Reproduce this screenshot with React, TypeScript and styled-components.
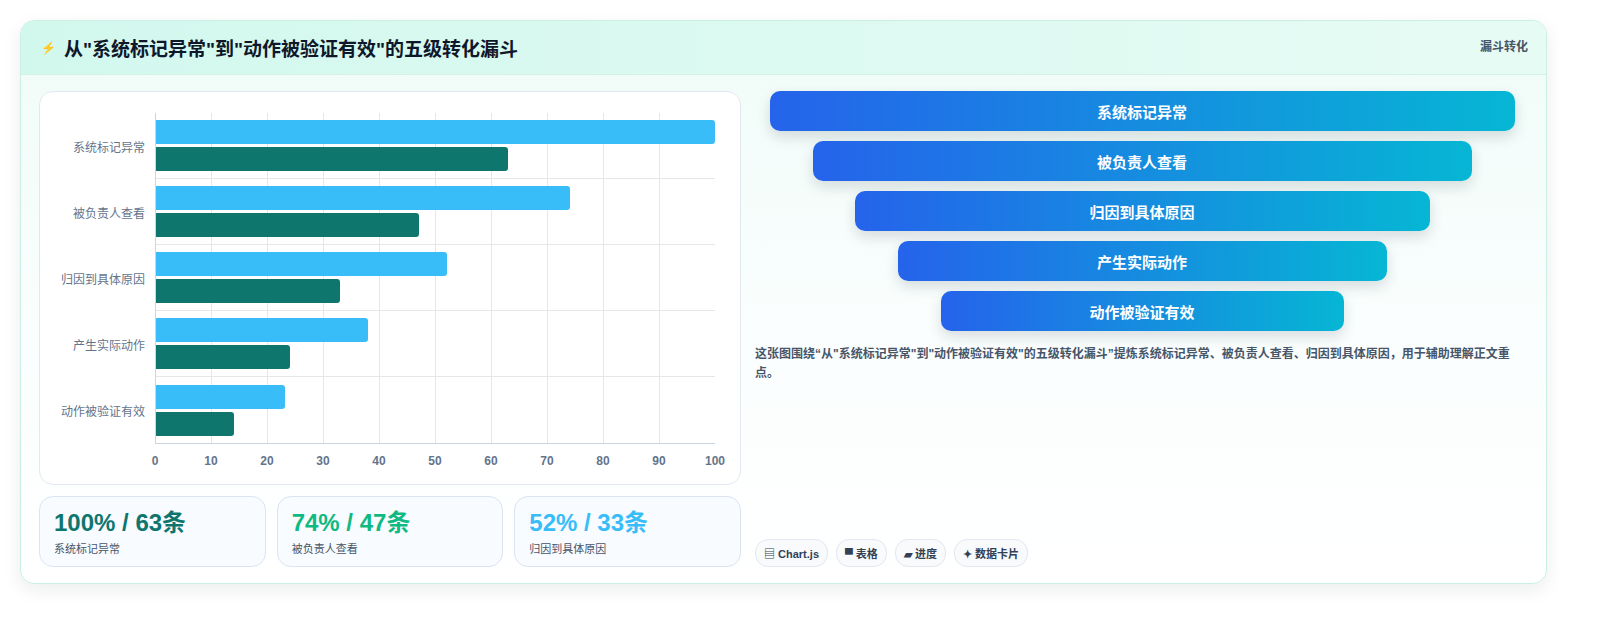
import styled, { createGlobalStyle } from "styled-components";

const GlobalStyle = createGlobalStyle`
  body {
    margin: 0;
    background: #ffffff;
    font-family: "Liberation Sans", "Noto Sans CJK SC", sans-serif;
  }
`;

const rows = [
  { name: "系统标记异常", a: 100, b: 63 },
  { name: "被负责人查看", a: 74, b: 47 },
  { name: "归因到具体原因", a: 52, b: 33 },
  { name: "产生实际动作", a: 38, b: 24 },
  { name: "动作被验证有效", a: 23, b: 14 },
];

const funnelWidths = [745, 659, 575, 489, 403];

const stats = [
  { value: "100% / 63条", label: "系统标记异常", color: "#0f766e" },
  { value: "74% / 47条", label: "被负责人查看", color: "#10b981" },
  { value: "52% / 33条", label: "归因到具体原因", color: "#38bdf8" },
];

const tags = ["▤ Chart.js", "▀ 表格", "▰ 进度", "✦ 数据卡片"];

const Page = styled.div`
  padding: 20px 0 20px 20px;
`;

const Card = styled.div`
  width: 1527px;
  height: 564px;
  box-sizing: border-box;
  border: 1px solid #c9f0e3;
  border-radius: 14px;
  background: linear-gradient(180deg, #effcf8 0%, #fbfefe 60%, #ffffff 100%);
  box-shadow: 0 6px 18px rgba(15, 23, 42, 0.08);
  overflow: hidden;
  display: flex;
  flex-direction: column;
`;

const Header = styled.div`
  height: 53px;
  flex-shrink: 0;
  display: flex;
  align-items: center;
  justify-content: space-between;
  padding: 0 18px 0 20px;
  background: linear-gradient(90deg, #d2f8ee, #e6fbf4);
  border-bottom: 1px solid #d4f1e8;
`;

const Title = styled.h1`
  margin: 0;
  font-size: 19px;
  font-weight: 700;
  color: #0f172a;
  display: flex;
  align-items: center;
  gap: 8px;
`;

const Bolt = styled.span`
  color: #3b82f6;
  font-size: 12px;
`;

const Badge = styled.span`
  font-size: 12px;
  font-weight: 700;
  color: #475569;
  align-self: flex-start;
  margin-top: 16px;
`;

const Body = styled.div`
  flex: 1;
  display: flex;
  gap: 14px;
  padding: 16px 17px 16px 18px;
`;

const LeftCol = styled.div`
  width: 702px;
  flex-shrink: 0;
  display: flex;
  flex-direction: column;
  gap: 11px;
`;

const ChartCard = styled.div`
  height: 394px;
  box-sizing: border-box;
  background: #fff;
  border: 1px solid #e2e8f0;
  border-radius: 14px;
  padding: 21px 26px 0 14px;
`;

const Plot = styled.div`
  display: grid;
  grid-template-columns: 101px 560px;
`;

const Labels = styled.div`
  display: flex;
  flex-direction: column;
`;

const CatLabel = styled.div`
  height: 66px;
  display: flex;
  align-items: center;
  justify-content: flex-end;
  padding-right: 10px;
  font-size: 12px;
  color: #64748b;
`;

const Area = styled.div`
  position: relative;
  border-left: 1px solid #cbd5e1;
  border-bottom: 1px solid #cbd5e1;
  background-image: linear-gradient(90deg, #e5e7eb 1px, transparent 1px);
  background-size: 56px 100%;
  background-position: 55px 0;
`;

const Row = styled.div<{ $last?: boolean }>`
  height: 66px;
  box-sizing: border-box;
  display: flex;
  flex-direction: column;
  justify-content: center;
  gap: 3px;
  border-bottom: ${(p) => (p.$last ? "none" : "1px solid #e5e7eb")};
`;

const Bar = styled.div<{ $color: string }>`
  height: 24px;
  background: ${(p) => p.$color};
  border-radius: 0 3px 3px 0;
`;

const Ticks = styled.div`
  margin-left: 101px;
  width: 560px;
  display: flex;
  justify-content: space-between;
  padding-top: 10px;
`;

const Tick = styled.span`
  width: 0;
  display: flex;
  justify-content: center;
  font-size: 12px;
  font-weight: 700;
  color: #64748b;
  white-space: nowrap;
`;

const StatRow = styled.div`
  display: grid;
  grid-template-columns: repeat(3, 1fr);
  gap: 11px;
`;

const StatCard = styled.div`
  height: 71px;
  box-sizing: border-box;
  border: 1px solid #dbe4f0;
  border-radius: 14px;
  background: #f8fbff;
  padding: 12px 14px;
`;

const StatValue = styled.div<{ $color: string }>`
  font-size: 24px;
  font-weight: 700;
  color: ${(p) => p.$color};
  line-height: 28px;
`;

const StatLabel = styled.div`
  font-size: 11px;
  color: #475569;
  margin-top: 3px;
`;

const RightCol = styled.div`
  flex: 1;
  display: flex;
  flex-direction: column;
`;

const Funnel = styled.div`
  display: flex;
  flex-direction: column;
  align-items: center;
  gap: 10px;
`;

const Stage = styled.div`
  height: 40px;
  border-radius: 10px;
  background: linear-gradient(90deg, #2563eb, #06b6d4);
  box-shadow: 0 6px 14px rgba(15, 23, 42, 0.14);
  color: #fff;
  font-size: 15px;
  font-weight: 700;
  display: flex;
  align-items: center;
  justify-content: center;
`;

const Desc = styled.p`
  margin: 14px 0 0;
  font-size: 12px;
  font-weight: 700;
  line-height: 19px;
  color: #475569;
`;

const Tags = styled.div`
  margin-top: auto;
  display: flex;
  gap: 8px;
`;

const Tag = styled.span`
  height: 26px;
  padding: 0 8px;
  display: flex;
  align-items: center;
  border: 1px solid #e2e8f0;
  border-radius: 13px;
  background: #f8fafc;
  font-size: 11px;
  font-weight: 700;
  color: #334155;
`;

export default function App() {
  return (
    <Page>
      <GlobalStyle />
      <Card>
        <Header>
          <Title>
            <Bolt>⚡</Bolt>从"系统标记异常"到"动作被验证有效"的五级转化漏斗
          </Title>
          <Badge>漏斗转化</Badge>
        </Header>
        <Body>
          <LeftCol>
            <ChartCard>
              <Plot>
                <Labels>
                  {rows.map((r) => (
                    <CatLabel key={r.name}>{r.name}</CatLabel>
                  ))}
                </Labels>
                <Area>
                  {rows.map((r, i) => (
                    <Row key={r.name} $last={i === rows.length - 1}>
                      <Bar $color="#38bdf8" style={{ width: `${r.a}%` }} />
                      <Bar $color="#0f766e" style={{ width: `${r.b}%` }} />
                    </Row>
                  ))}
                </Area>
              </Plot>
              <Ticks>
                {[0, 10, 20, 30, 40, 50, 60, 70, 80, 90, 100].map((t) => (
                  <Tick key={t}>{t}</Tick>
                ))}
              </Ticks>
            </ChartCard>
            <StatRow>
              {stats.map((s) => (
                <StatCard key={s.label}>
                  <StatValue $color={s.color}>{s.value}</StatValue>
                  <StatLabel>{s.label}</StatLabel>
                </StatCard>
              ))}
            </StatRow>
          </LeftCol>
          <RightCol>
            <Funnel>
              {rows.map((r, i) => (
                <Stage key={r.name} style={{ width: funnelWidths[i] }}>
                  {r.name}
                </Stage>
              ))}
            </Funnel>
            <Desc>
              这张图围绕“从"系统标记异常"到"动作被验证有效"的五级转化漏斗”提炼系统标记异常、被负责人查看、归因到具体原因，用于辅助理解正文重点。
            </Desc>
            <Tags>
              {tags.map((t) => (
                <Tag key={t}>{t}</Tag>
              ))}
            </Tags>
          </RightCol>
        </Body>
      </Card>
    </Page>
  );
}
